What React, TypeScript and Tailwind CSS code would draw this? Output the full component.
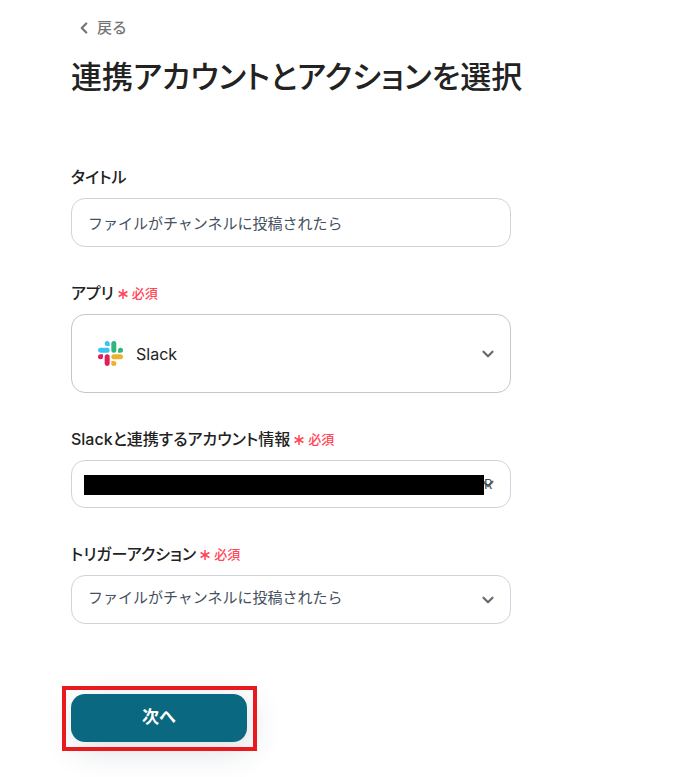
import React from 'react';
import { ChevronDown, ChevronLeft } from 'lucide-react';

const fieldClass =
  'col-start-1 row-start-1 w-full appearance-none rounded-[14px] border border-[#cfd3db] bg-white px-4 text-[15px] text-[#45505e] outline-none';

const SlackLogo = () => (
  <svg viewBox="0 0 24 24" className="h-[25px] w-[25px]" aria-hidden="true">
    <path fill="#36c5f0" d="M8.8 0a2.4 2.4 0 1 0 0 4.8h2.4V2.4A2.4 2.4 0 0 0 8.8 0zM8.8 6.4H2.4a2.4 2.4 0 1 0 0 4.8h6.4a2.4 2.4 0 1 0 0-4.8z" />
    <path fill="#2eb67d" d="M24 8.8a2.4 2.4 0 1 0-4.8 0v2.4h2.4A2.4 2.4 0 0 0 24 8.8zM17.6 8.8V2.4a2.4 2.4 0 1 0-4.8 0v6.4a2.4 2.4 0 1 0 4.8 0z" />
    <path fill="#ecb22e" d="M15.2 24a2.4 2.4 0 1 0 0-4.8h-2.4v2.4a2.4 2.4 0 0 0 2.4 2.4zM15.2 17.6h6.4a2.4 2.4 0 1 0 0-4.8h-6.4a2.4 2.4 0 1 0 0 4.8z" />
    <path fill="#e01e5a" d="M0 15.2a2.4 2.4 0 1 0 4.8 0v-2.4H2.4A2.4 2.4 0 0 0 0 15.2zM6.4 15.2v6.4a2.4 2.4 0 1 0 4.8 0v-6.4a2.4 2.4 0 1 0-4.8 0z" />
  </svg>
);

const Required = () => (
  <span className="ml-1 inline-flex items-center gap-1 pt-px text-[13px] font-medium text-[#ff4757]">
    <svg viewBox="0 0 10 10" className="mt-px h-[10px] w-[10px]" fill="none" stroke="currentColor" strokeWidth="1.5" aria-hidden="true">
      <path d="M5 0v10M0.6 2.5l8.8 5M0.6 7.5l8.8-5" />
    </svg>
    必須
  </span>
);

type FieldProps = {
  id: string;
  label: string;
  required?: boolean;
  children: React.ReactNode;
};

const Field = ({ id, label, required, children }: FieldProps) => (
  <div>
    <label
      htmlFor={id}
      className="mb-[9px] flex h-6 items-center text-base font-medium text-[#222] [font-feature-settings:'palt']"
    >
      {label}
      {required && <Required />}
    </label>
    <div className="relative grid items-center">{children}</div>
  </div>
);

const Arrow = () => (
  <ChevronDown
    className="pointer-events-none col-start-1 row-start-1 mr-[14px] h-[18px] w-[18px] justify-self-end text-[#6b6b6b]"
    strokeWidth={3}
  />
);

const App = () => {
  return (
    <main className="min-h-screen bg-white pt-4 pr-6 pb-8 pl-[71px] font-['Inter','Noto_Sans_CJK_JP',sans-serif]">
      <a href="#" className="ml-1 flex h-6 w-fit items-center gap-1 text-[15px] font-medium text-[#757575]">
        <ChevronLeft className="h-[18px] w-[18px]" strokeWidth={3} />
        戻る
      </a>
      <h1 className="mt-4 text-[31px] leading-[42px] font-medium text-[#222] [font-feature-settings:'palt']">
        連携アカウントとアクションを選択
      </h1>

      <form className="mt-[67px] max-w-[440px]">
        <div className="flex flex-col gap-[34px]">
          <Field id="title" label="タイトル">
            <input id="title" type="text" defaultValue="ファイルがチャンネルに投稿されたら" className={`h-[49px] ${fieldClass}`} />
          </Field>

          <Field id="app" label="アプリ" required>
            <select
              id="app"
              className="col-start-1 row-start-1 h-[79px] w-full appearance-none rounded-[14px] border border-[#c6c6c6] bg-white pr-12 pl-16 text-base text-[#222] outline-none"
            >
              <option>Slack</option>
            </select>
            <span className="pointer-events-none col-start-1 row-start-1 ml-[27px]">
              <SlackLogo />
            </span>
            <Arrow />
          </Field>

          <Field id="account" label="Slackと連携するアカウント情報" required>
            <select id="account" className={`h-12 ${fieldClass}`}>
              <option></option>
            </select>
            <Arrow />
            <div className="pointer-events-none absolute inset-y-0 right-5 left-[13px] flex items-center pt-0.5">
              <span className="h-5 flex-1 bg-black" />
              <span className="w-[7px] text-[13px] text-[#45505e]">R</span>
            </div>
          </Field>

          <Field id="trigger" label="トリガーアクション" required>
            <select id="trigger" className={`h-[49px] pb-0.5 ${fieldClass}`}>
              <option>ファイルがチャンネルに投稿されたら</option>
            </select>
            <Arrow />
          </Field>
        </div>

        <div className="relative mt-[70px] w-fit">
          <button
            type="button"
            className="h-12 w-44 rounded-[14px] bg-[#0b6881] text-[17px] font-bold text-white shadow-[4px_8px_32px_rgba(30,50,70,0.16)]"
          >
            次へ
          </button>
          <div className="pointer-events-none absolute -top-2 -right-[10px] -bottom-[9px] -left-[9px] border-4 border-[#e81a20]" />
        </div>
      </form>
    </main>
  );
};

export default App;
